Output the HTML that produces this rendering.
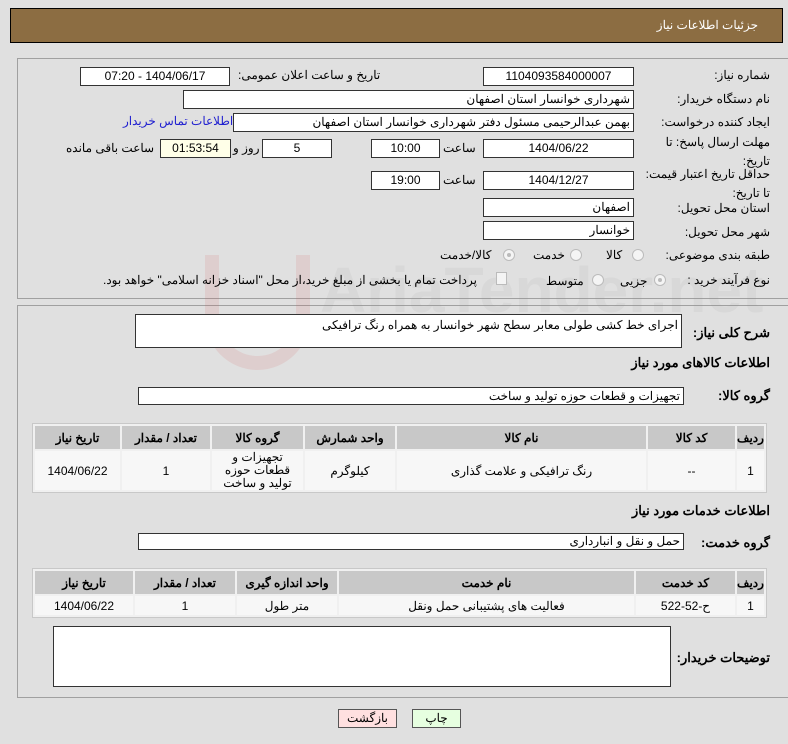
<!DOCTYPE html>
<html><head><meta charset="utf-8"><style>
body{margin:0;width:788px;height:744px;background:#e0e0e0;font-family:Tahoma,"Liberation Sans","Noto Sans CJK SC",sans-serif;font-size:12px;color:#000;position:relative;overflow:hidden;direction:rtl}
.a{position:absolute;white-space:nowrap}
.in{position:absolute;background:#fff;border:1px solid #333;box-sizing:border-box;height:19px;line-height:17px;padding:0 3px;white-space:nowrap;text-align:right;font-size:12px}
.c{text-align:center}
.b{font-weight:bold;font-size:13px}
.panel{position:absolute;border:1px solid #a0a0a0;border-right:none;box-sizing:border-box}
.rad{position:absolute;width:12px;height:12px;border-radius:50%;border:1px solid #bbb;background:#f4f4f4;box-sizing:border-box}
.rad.on::after{content:"";position:absolute;left:3px;top:3px;width:4px;height:4px;border-radius:50%;background:#bbb}
table{position:absolute;border-collapse:separate;border-spacing:2px;background:#f0f0f0;border:1px solid #c8c8c8;direction:rtl}
td,th{text-align:center;font-size:12px;padding:0}
th{background:#c8c8c8;font-weight:bold}
td{background:#f7f7f7}
</style></head><body>
<div class="a" style="left:10px;top:8px;width:773px;height:35px;background:#8c6d42;border:1px solid #000;box-sizing:border-box"></div>
<div class="a" style="right:30px;top:18px;color:#fff;font-size:12px">جزئیات اطلاعات نیاز</div>

<div class="panel" style="left:17px;top:58px;width:780px;height:241px"></div>
<div class="panel" style="left:17px;top:305px;width:780px;height:393px"></div>

<div class="a" style="left:320px;top:290px;font-size:64px;font-weight:bold;color:rgba(150,150,150,0.10);font-family:'Liberation Sans',sans-serif;direction:ltr;transform:translateY(-50%)">AriaTender.net</div>
<div class="a" style="left:205px;top:255px;width:105px;height:115px;border:14px solid rgba(210,80,80,0.12);border-top:none;border-radius:0 0 55px 55px;box-sizing:border-box"></div>

<div class="a" style="right:18px;top:68px">شماره نیاز:</div>
<div class="in c" style="left:483px;top:67px;width:151px">1104093584000007</div>
<div class="a" style="left:238px;top:68px">تاریخ و ساعت اعلان عمومی:</div>
<div class="in c" style="left:80px;top:67px;width:150px">1404/06/17 - 07:20</div>

<div class="a" style="right:18px;top:92px">نام دستگاه خریدار:</div>
<div class="in" style="left:183px;top:90px;width:451px">شهرداری خوانسار استان اصفهان</div>

<div class="a" style="right:18px;top:115px">ایجاد کننده درخواست:</div>
<div class="in" style="left:233px;top:113px;width:401px">بهمن عبدالرحیمی مسئول دفتر شهرداری خوانسار استان اصفهان</div>
<div class="a" style="left:123px;top:114px;color:#2020d0">اطلاعات تماس خریدار</div>

<div class="a" style="right:18px;top:133px;line-height:19px;white-space:normal;width:120px">مهلت ارسال پاسخ: تا تاریخ:</div>
<div class="in c" style="left:483px;top:139px;width:151px">1404/06/22</div>
<div class="a" style="left:443px;top:141px">ساعت</div>
<div class="in c" style="left:371px;top:139px;width:69px">10:00</div>
<div class="in c" style="left:262px;top:139px;width:70px">5</div>
<div class="a" style="left:233px;top:141px">روز و</div>
<div class="in c" style="left:160px;top:139px;width:71px;background:#ffffe8">01:53:54</div>
<div class="a" style="left:66px;top:141px">ساعت باقی مانده</div>

<div class="a" style="right:18px;top:165px;line-height:19px;white-space:normal;width:130px">حداقل تاریخ اعتبار قیمت: تا تاریخ:</div>
<div class="in c" style="left:483px;top:171px;width:151px">1404/12/27</div>
<div class="a" style="left:443px;top:173px">ساعت</div>
<div class="in c" style="left:371px;top:171px;width:69px">19:00</div>

<div class="a" style="right:18px;top:201px">استان محل تحویل:</div>
<div class="in" style="left:483px;top:198px;width:151px">اصفهان</div>
<div class="a" style="right:18px;top:225px">شهر محل تحویل:</div>
<div class="in" style="left:483px;top:221px;width:151px">خوانسار</div>

<div class="a" style="right:18px;top:248px">طبقه بندی موضوعی:</div>
<div class="rad" style="left:632px;top:249px"></div><div class="a" style="left:606px;top:248px">کالا</div>
<div class="rad" style="left:570px;top:249px"></div><div class="a" style="left:533px;top:248px">خدمت</div>
<div class="rad on" style="left:503px;top:249px"></div><div class="a" style="left:440px;top:248px">کالا/خدمت</div>

<div class="a" style="right:18px;top:273px">نوع فرآیند خرید :</div>
<div class="rad on" style="left:654px;top:274px"></div><div class="a" style="left:620px;top:274px">جزیی</div>
<div class="rad" style="left:592px;top:274px"></div><div class="a" style="left:546px;top:274px">متوسط</div>
<div class="a" style="left:496px;top:272px;width:9px;height:11px;border:1px solid #bbb;background:#f4f4f4"></div>
<div class="a" style="left:103px;top:273px">پرداخت تمام یا بخشی از مبلغ خرید،از محل "اسناد خزانه اسلامی" خواهد بود.</div>

<div class="a b" style="right:18px;top:325px">شرح کلی نیاز:</div>
<div class="in" style="left:135px;top:314px;width:547px;height:34px;line-height:20px">اجرای خط کشی طولی معابر سطح شهر خوانسار به همراه رنگ ترافیکی</div>
<div class="a b" style="right:18px;top:355px">اطلاعات کالاهای مورد نیاز</div>
<div class="a b" style="right:18px;top:388px">گروه کالا:</div>
<div class="in" style="left:138px;top:387px;width:546px;height:18px;line-height:16px">تجهیزات و قطعات حوزه تولید و ساخت</div>

<table style="left:32px;top:423px;width:735px;height:70px">
<tr style="height:23px"><th style="width:27px">ردیف</th><th style="width:87px">کد کالا</th><th style="width:249px">نام کالا</th><th style="width:90px">واحد شمارش</th><th style="width:91px">گروه کالا</th><th style="width:88px">تعداد / مقدار</th><th>تاریخ نیاز</th></tr>
<tr><td>1</td><td>--</td><td>رنگ ترافیکی و علامت گذاری</td><td>کیلوگرم</td><td style="line-height:13px;padding:0 6px">تجهیزات و قطعات حوزه تولید و ساخت</td><td>1</td><td>1404/06/22</td></tr>
</table>

<div class="a b" style="right:18px;top:503px">اطلاعات خدمات مورد نیاز</div>
<div class="a b" style="right:18px;top:535px">گروه خدمت:</div>
<div class="in" style="left:138px;top:533px;width:546px;height:17px;line-height:15px">حمل و نقل و انبارداری</div>

<table style="left:32px;top:568px;width:735px;height:50px">
<tr style="height:23px"><th style="width:27px">ردیف</th><th style="width:99px">کد خدمت</th><th style="width:295px">نام خدمت</th><th style="width:100px">واحد اندازه گیری</th><th style="width:100px">تعداد / مقدار</th><th>تاریخ نیاز</th></tr>
<tr><td>1</td><td>ح-52-522</td><td>فعالیت های پشتیبانی حمل ونقل</td><td>متر طول</td><td>1</td><td>1404/06/22</td></tr>
</table>

<div class="a b" style="right:18px;top:650px">توضیحات خریدار:</div>
<div class="in" style="left:53px;top:626px;width:618px;height:61px"></div>

<div class="a c" style="left:338px;top:709px;width:59px;height:19px;line-height:17px;background:#ffe0e0;border:1px solid #555;box-sizing:border-box">بازگشت</div>
<div class="a c" style="left:412px;top:709px;width:49px;height:19px;line-height:17px;background:#e6ffe0;border:1px solid #555;box-sizing:border-box">چاپ</div>
</body></html>
